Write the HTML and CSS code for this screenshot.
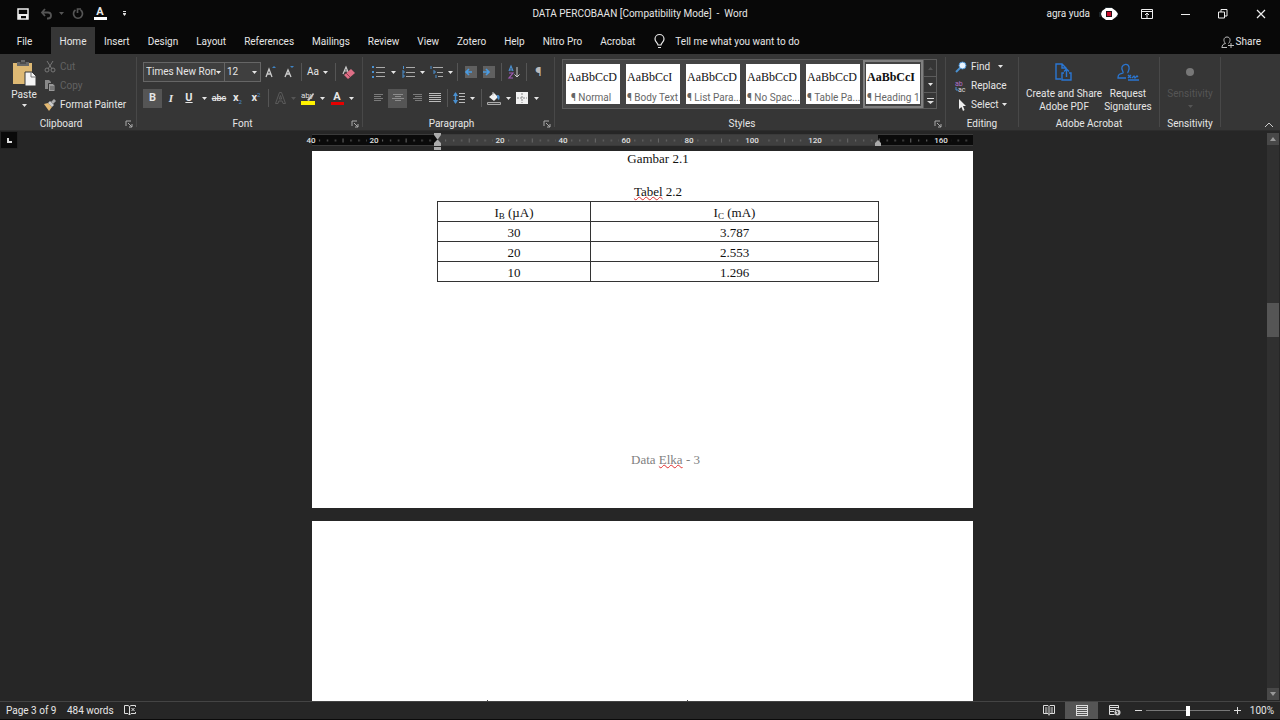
FILE: index.html
```html
<!DOCTYPE html>
<html lang="en">
<head>
<meta charset="utf-8">
<title>DATA PERCOBAAN [Compatibility Mode] - Word</title>
<link rel="stylesheet" href="styles.css">
</head>
<body>
<svg class="defs" aria-hidden="true">
  <symbol id="arrow" viewBox="0 0 5 3"><path d="M0 0h5L2.500 3z" fill="currentColor"/></symbol>
  <symbol id="launch" viewBox="0 0 8 8"><path d="M1 6V1h5M3 3l4 4M7 4v3H4" fill="none" stroke="currentColor"/></symbol>
</svg>
<div class="app">
  <header class="titlebar">
    <div class="quick">
      <button class="ib" aria-label="Save"><svg width="12" height="12" viewBox="0 0 12 12"><path d="M1 1h10v10H1z" fill="none" stroke="#eee" stroke-width="1.500"/><path d="M1 6h10v5H9V8H4v3H1z" fill="#eee"/></svg></button>
      <button class="ib dim" aria-label="Undo"><svg width="14" height="12" viewBox="0 0 14 12"><path d="M5 1L2 4.500 5 8M2 4.500h6c4 0 4 6 0 6H7" fill="none" stroke="currentColor" stroke-width="1.800"/></svg></button>
      <button class="drop dim" aria-label="Undo list"><svg width="5" height="3"><use href="#arrow"/></svg></button>
      <button class="ib dim" aria-label="Redo"><svg width="12" height="12" viewBox="0 0 12 12"><path d="M8.500 2a4.500 4.500 0 1 1-5 0M3 1h3.500v4" fill="none" stroke="currentColor" stroke-width="1.700" transform="matrix(-1 0 0 1 12 0)"/></svg></button>
      <button class="ib colorA white" aria-label="Font colour"><span>A</span><i></i></button>
      <button class="more" aria-label="Customize"><svg width="3" height="5" viewBox="0 0 3 5"><path d="M0 0h3v1H0zM0 2h3v1L1.500 5 0 3z" fill="#ddd"/></svg></button>
    </div>
    <h1>DATA PERCOBAAN [Compatibility Mode]&nbsp; - &nbsp;Word</h1>
    <div class="window">
      <span>agra yuda</span>
      <svg class="avatar" width="18" height="16" viewBox="0 0 18 16"><path d="M0 6v5M17 6v5M5 2h7" stroke="#30434a"/><path d="M6 2h6l4 3 2 3-2 3-4 3H6l-4-3-1-3 1-3z" fill="#fff"/><path d="M6 5h6v6H6z" fill="#241118"/><path d="M7 6h4v4H7z" fill="#c8102e"/></svg>
      <button aria-label="Ribbon display"><svg width="12" height="10" viewBox="0 0 12 10"><path d="M.5.5h11v9H.5zM.5 2.500h11M6 9V4M4 6l2-2 2 2" fill="none" stroke="#eee"/></svg></button>
      <button aria-label="Minimize"><svg width="9" height="10"><path d="M0 5.500h9" stroke="#eee"/></svg></button>
      <button aria-label="Restore"><svg width="10" height="10" viewBox="0 0 10 10"><path d="M.5 3h6v6h-6zM3 3V.5h6V7H6.500" fill="none" stroke="#eee"/></svg></button>
      <button aria-label="Close"><svg width="10" height="10" viewBox="0 0 10 10"><path d="M1 1l8 8M9 1L1 9" stroke="#eee" stroke-width="1.200"/></svg></button>
    </div>
  </header>
  <nav class="tabs">
    <button>File</button><button class="on">Home</button><button>Insert</button><button>Design</button><button>Layout</button><button>References</button><button>Mailings</button><button>Review</button><button>View</button><button>Zotero</button><button>Help</button><button>Nitro Pro</button><button>Acrobat</button>
    <label class="tell"><svg width="12" height="15" viewBox="0 0 12 15"><path d="M4 11c0-2-3-3-3-6a4.500 4.500 0 0 1 9 0c0 3-3 4-3 6zM4 13.500h3" fill="none" stroke="#e8e8e8" stroke-width="1.200"/></svg><input type="text" aria-label="Tell me what you want to do" placeholder="Tell me what you want to do"></label>
    <button class="share"><svg width="13" height="13" viewBox="0 0 13 13"><path d="M1 12c0-3 1-4 3.500-4.500C2 5 2.500 1 6 1s4 4 1.500 6.500M1 11.500h5M10 7v5M7 9.500h6" fill="none" stroke="#bbb"/></svg>Share</button>
  </nav>
  <section class="ribbon">
    <div class="group clip">
      <div class="body">
        <button class="paste"><svg width="24" height="26" viewBox="0 0 24 26"><path d="M1 3h19v21H1z" fill="#deb974"/><path d="M5 2h4V0h4v2h4v4H5z" fill="#686868"/><path d="M8 3h6" stroke="#333"/><path d="M13 12h7l4 4v10H13z" fill="#f4f4f4" stroke="#363636"/><path d="M19 12v5h5" fill="none" stroke="#777"/></svg><span>Paste</span><svg width="5" height="3"><use href="#arrow"/></svg></button>
        <div class="stack">
          <button class="line off"><svg width="12" height="12" viewBox="0 0 12 12"><path d="M3 0l5 8M9 0L4 8" stroke="#777" fill="none"/><circle cx="3" cy="9" r="2" fill="none" stroke="#777"/><circle cx="9" cy="9" r="2" fill="none" stroke="#777"/></svg>Cut</button>
          <button class="line off"><svg width="12" height="12" viewBox="0 0 12 12"><path d="M1 0h4l2 2v7H1z" fill="#888"/><path d="M4.500 3.500H9l2 2v6H4.500z" fill="#999" stroke="#363636"/><path d="M6 7h4M6 9h4" stroke="#555"/></svg>Copy</button>
          <button class="line"><svg width="12" height="12" viewBox="0 0 12 12"><path d="M0 5l4-1 4 4-3 4z" fill="#e2b872"/><path d="M4 4l2-2 4 4-2 2z" fill="#ccc"/><path d="M7 3l3-3 2 2-3 3z" fill="#aaa"/></svg>Format Painter</button>
        </div>
      </div>
      <div class="name">Clipboard<button aria-label="Clipboard options"><svg width="8" height="8"><use href="#launch"/></svg></button></div>
    </div>
    <div class="group font">
      <div class="body rows">
        <div class="r f1">
          <label class="sel"><select aria-label="Font"><option>Times New Roman</option></select><svg width="5" height="3"><use href="#arrow"/></svg></label>
          <label class="sel"><select aria-label="Font size"><option>12</option></select><svg width="5" height="3"><use href="#arrow"/></svg></label>
          <button class="gl" aria-label="Grow font"><svg width="14" height="12" viewBox="0 0 14 12"><path d="M2 11L5 3l3 8M3 8h4" fill="none" stroke="#ccc" stroke-width="1.300"/><path d="M8 2l2-2 2 2z" fill="#3f83c4"/></svg></button>
          <button class="gl" aria-label="Shrink font"><svg width="12" height="12" viewBox="0 0 12 12"><path d="M2 11l3-7 3 7M3 8h4" fill="none" stroke="#ccc" stroke-width="1.300"/><path d="M7 0h4L9 2z" fill="#3f83c4"/></svg></button>
          <i class="sep"></i><button class="gl">Aa</button><button class="drop" aria-label="Change case"><svg width="5" height="3"><use href="#arrow"/></svg></button><i class="sep"></i>
          <button class="gl" aria-label="Clear formatting"><svg width="13" height="13" viewBox="0 0 13 13"><path d="M1 8l3-7 2 5M2 5h3" fill="none" stroke="#ccc" stroke-width="1.200"/><path d="M2 9l7-6 4 4-7 6z" fill="#de6f86"/><path d="M4 7l4 4" stroke="#8b3c50"/></svg></button>
        </div>
        <div class="r f2">
          <button class="gl on"><b>B</b></button><button class="gl ital"><b>I</b></button><button class="gl"><b><u>U</u></b></button><button class="drop" aria-label="Underline style"><svg width="5" height="3"><use href="#arrow"/></svg></button>
          <button class="gl strike"><s>abc</s></button><button class="gl"><b>x</b><small class="lo">2</small></button><button class="gl"><b>x</b><small class="hi">2</small></button><i class="sep"></i>
          <button class="gl" aria-label="Text effects"><svg width="11" height="12" viewBox="0 0 11 12"><path d="M.5 11.500L4.500.5h2l4 11H8L7.200 9H3.800L3 11.500zM4.300 7h2.400L5.500 3.500z" fill="none" stroke="#5a5a5a"/></svg></button><button class="drop dim" aria-label="Text effect list"><svg width="5" height="3"><use href="#arrow"/></svg></button>
          <button class="gl" aria-label="Highlight"><svg width="14" height="14" viewBox="0 0 14 14"><text x="0" y="7" font-size="8" fill="#ddd">aby</text><path d="M6 9l6-7 1 1-5 7z" fill="#ccc"/><path d="M0 10h14v4H0z" fill="#fff200"/></svg></button><button class="drop" aria-label="Highlight colour"><svg width="5" height="3"><use href="#arrow"/></svg></button>
          <button class="gl colorA red" aria-label="Font colour"><span>A</span><i></i></button><button class="drop" aria-label="Font colours"><svg width="5" height="3"><use href="#arrow"/></svg></button>
        </div>
      </div>
      <div class="name">Font<button aria-label="Font options"><svg width="8" height="8"><use href="#launch"/></svg></button></div>
    </div>
    <div class="group para">
      <div class="body rows">
        <div class="r p1">
          <button class="gl" aria-label="Bullets"><svg width="13" height="12" viewBox="0 0 13 12"><path d="M0 1h2M0 6h2M0 11h2" stroke="#4a90d0" stroke-width="2"/><path d="M4 1.500h9M4 6.500h9M4 10.500h9" stroke="#aaa"/></svg></button><button class="drop" aria-label="Bullet style"><svg width="5" height="3"><use href="#arrow"/></svg></button>
          <button class="gl" aria-label="Numbering"><svg width="13" height="12" viewBox="0 0 13 12"><path d="M1.500 0v3M0 5h2v2H0M0 9h2v2H0" fill="none" stroke="#4a90d0"/><path d="M4 1.500h9M4 6.500h9M4 10.500h9" stroke="#aaa"/></svg></button><button class="drop" aria-label="Number style"><svg width="5" height="3"><use href="#arrow"/></svg></button>
          <button class="gl" aria-label="Multilevel list"><svg width="13" height="12" viewBox="0 0 13 12"><path d="M1 0v3M3 5h2v2H3M6 9v3" fill="none" stroke="#4a90d0"/><path d="M3 1.500h10M7 6.500h6M8 10.500h5" stroke="#aaa"/></svg></button><button class="drop" aria-label="List style"><svg width="5" height="3"><use href="#arrow"/></svg></button><i class="sep"></i>
          <button class="gl" aria-label="Decrease indent"><svg width="12" height="12" viewBox="0 0 12 12"><path d="M0 0h12v12H0z" fill="#606060"/><path d="M7 6H1M4 3L1 6l3 3" fill="none" stroke="#4a9ae0" stroke-width="1.700"/></svg></button>
          <button class="gl" aria-label="Increase indent"><svg width="12" height="12" viewBox="0 0 12 12"><path d="M0 0h12v12H0z" fill="#606060"/><path d="M0 6h6M3 3l3 3-3 3" fill="none" stroke="#4a9ae0" stroke-width="1.700"/></svg></button><i class="sep"></i>
          <button class="gl" aria-label="Sort"><svg width="12" height="13" viewBox="0 0 12 13"><path d="M1 5l2-5 2 5M1 4h4" fill="none" stroke="#4a90d0" stroke-width="1.200"/><path d="M1 7h4L1 12h4" fill="none" stroke="#a05ab5" stroke-width="1.200"/><path d="M9 1v10M6.500 8.500L9 11l2.500-2.500" fill="none" stroke="#ccc"/></svg></button><i class="sep"></i>
          <button class="gl pil">¶</button>
        </div>
        <div class="r p2">
          <button class="gl" aria-label="Align left"><svg width="10" height="10"><path d="M0 1.500h9M0 3.500h7M0 5.500h9M0 7.500h7" stroke="#7b7b7b"/></svg></button>
          <button class="gl on" aria-label="Centre"><svg width="12" height="10"><path d="M1 1.500h10M3 3.500h6M0 5.500h12M3 7.500h6" stroke="#8d8d8d"/></svg></button>
          <button class="gl" aria-label="Align right"><svg width="10" height="10"><path d="M1 1.500h9M3 3.500h7M1 5.500h9M3 7.500h7" stroke="#7b7b7b"/></svg></button>
          <button class="gl" aria-label="Justify"><svg width="12" height="10"><path d="M0 .5h12M0 2.500h12M0 4.500h12M0 6.500h12M0 8.500h12" stroke="#bbb"/></svg></button><i class="sep"></i>
          <button class="gl" aria-label="Line spacing"><svg width="12" height="12" viewBox="0 0 12 12"><path d="M2.500 1v10" stroke="#4a90d0" stroke-width="1.500"/><path d="M0 4l2.500-4L5 4zM0 8l2.500 4L5 8z" fill="#4a90d0"/><path d="M6 1.500h6M6 4.500h6M6 7.500h6M6 10.500h6" stroke="#bbb"/></svg></button><button class="drop" aria-label="Spacing list"><svg width="5" height="3"><use href="#arrow"/></svg></button><i class="sep"></i>
          <button class="gl" aria-label="Shading"><svg width="14" height="13" viewBox="0 0 14 13"><path d="M2 5l5-4 4 4-4 4z" fill="#f2f2f2"/><path d="M6 0v4" stroke="#ccc"/><path d="M10 3c3 0 3 2 2 5-2-1-2-3-2-5" fill="#4a90d0"/><path d="M.5 10.500h13v2H.5z" fill="#444" stroke="#aaa"/></svg></button><button class="drop" aria-label="Shading colours"><svg width="5" height="3"><use href="#arrow"/></svg></button>
          <button class="gl" aria-label="Borders"><svg width="12" height="12" viewBox="0 0 12 12"><path d="M0 0h12v12H0z" fill="#f2f2f2"/><path d="M6 1v10M1 6h10" stroke="#888" stroke-dasharray="2 1"/></svg></button><button class="drop" aria-label="Border list"><svg width="5" height="3"><use href="#arrow"/></svg></button>
        </div>
      </div>
      <div class="name">Paragraph<button aria-label="Paragraph options"><svg width="8" height="8"><use href="#launch"/></svg></button></div>
    </div>
    <div class="group styles">
      <div class="body">
        <div class="gallery">
          <button class="tile"><span>AaBbCcD</span><em>¶ Normal</em></button><button class="tile"><span>AaBbCcI</span><em>¶ Body Text</em></button><button class="tile"><span>AaBbCcD</span><em>¶ List Para...</em></button><button class="tile"><span>AaBbCcD</span><em>¶ No Spac...</em></button><button class="tile"><span>AaBbCcD</span><em>¶ Table Pa...</em></button><button class="tile cur"><span>AaBbCcI</span><em>¶ Heading 1</em></button>
          <div class="scroller"><button class="dim" aria-label="Previous styles"><svg width="5" height="3"><path d="M0 3h5L2.500 0z" fill="currentColor"/></svg></button><button aria-label="Next styles"><svg width="5" height="3"><use href="#arrow"/></svg></button><button aria-label="More styles"><svg width="7" height="6"><path d="M0 0h7v1H0zM0 3h7L3.500 6z" fill="#ddd"/></svg></button></div>
        </div>
      </div>
      <div class="name">Styles<button aria-label="Styles options"><svg width="8" height="8"><use href="#launch"/></svg></button></div>
    </div>
    <div class="group edit">
      <div class="body stack">
        <button class="line"><svg width="12" height="12" viewBox="0 0 12 12"><path d="M5 7l-4 4" stroke="#4a90d0" stroke-width="2"/><circle cx="7.500" cy="4.500" r="3.500" fill="#e9f4ff" stroke="#4a90d0"/></svg>Find<svg class="far" width="5" height="3"><use href="#arrow"/></svg></button>
        <button class="line"><svg width="12" height="12" viewBox="0 0 12 12"><text x="0" y="6" font-size="7" fill="#b070c8">ab</text><text x="3" y="12" font-size="7" fill="#ddd">ac</text><path d="M1 7v3h2" fill="none" stroke="#4a90d0"/></svg>Replace</button>
        <button class="line"><svg width="12" height="12" viewBox="0 0 12 12"><path d="M4 0v10l2.500-2L8 12l1.500-1L8 7h3z" fill="#eee"/></svg>Select<svg width="5" height="3"><use href="#arrow"/></svg></button>
      </div>
      <div class="name">Editing</div>
    </div>
    <div class="group adobe">
      <div class="body">
        <button class="big"><svg width="18" height="19" viewBox="0 0 18 19"><path d="M6 16H1V1h6l4 4v3M7 1v4h4M9 10H7v7h9v-7h-2M11.500 14V6M9 8.500L11.500 6 14 8.500" fill="none" stroke="#2a76d2" stroke-width="1.400"/></svg><span>Create and Share<br>Adobe PDF</span></button>
        <button class="big"><svg width="22" height="19" viewBox="0 0 22 19"><path d="M9 15H1c0-4 2-4 5-5 1-1-2-3-1-6s6-4 7 0-2 5-1 6M11 17h11M11 12l3 3M14 12l-3 3M15 15l2-2 1 2 2-2 1 1" fill="none" stroke="#2a76d2" stroke-width="1.300"/></svg><span>Request<br>Signatures</span></button>
      </div>
      <div class="name">Adobe Acrobat</div>
    </div>
    <div class="group sens">
      <div class="body"><button class="big off"><svg width="18" height="19"><circle cx="9" cy="9" r="4" fill="#777"/></svg><span>Sensitivity</span><svg width="5" height="3"><use href="#arrow"/></svg></button></div>
      <div class="name">Sensitivity</div>
    </div>
    <button class="fold" aria-label="Collapse ribbon"><svg width="10" height="6"><path d="M1 5l4-4 4 4" fill="none" stroke="#ccc"/></svg></button>
  </section>
  <main class="work">
    <button class="tabstop" aria-label="Tab selector"><svg width="5" height="5"><path d="M1 0v4h4" fill="none" stroke="#ddd" stroke-width="2"/></svg></button>
    <div class="desk">
      <svg class="ruler" width="661" height="20" viewBox="0 0 661 20" role="img" aria-label="Ruler">
        <defs><pattern id="ticks" x="-1" y="4" width="31.540" height="11" patternUnits="userSpaceOnUse"><path d="M.5 3.500v4M8.500 4.500v2M16.500 4.500v2M24.500 4.500v2" stroke="#6a6a6a"/></pattern></defs>
        <path d="M0 4h661v10H0z" fill="#0a0a0a"/><path d="M126 4h440v10H126z" fill="#404040"/><path d="M0 3.500h661M0 14.500h661" stroke="#3a3a3a"/>
        <path d="M0 4h661v10H0z" fill="url(#ticks)"/>
        <path d="M0 4h6v10H0zM55 4h14v10H55z" fill="#0a0a0a"/><path d="M181 4h14v10h-14zM244 4h14v10h-14zM307 4h14v10h-14zM370 4h14v10h-14zM430 4h20v10h-20zM493 4h20v10h-20z" fill="#404040"/><path d="M619 4h20v10h-20z" fill="#0a0a0a"/>
        <g class="nums"><text x="-1" y="12">40</text><text x="62" y="12">20</text><text x="188" y="12">20</text><text x="251" y="12">40</text><text x="314" y="12">60</text><text x="377" y="12">80</text><text x="440" y="12">100</text><text x="503" y="12">120</text><text x="629" y="12">160</text></g>
        <path d="M122 2h7v2l-3 4h-1l-3-4zM122 15v-3l3-3h1l3 3v3zM122 16h7v3h-7zM563 15v-3l3-3 3 3v3z" fill="#aaa"/>
      </svg>
      <article class="page first">
        <p>Gambar 2.1</p>
        <p class="cap"><span class="typo">Tabel</span> 2.2</p>
        <table><thead><tr><th>I<sub>B</sub> (µA)</th><th>I<sub>C</sub> (mA)</th></tr></thead>
        <tbody><tr><td>30</td><td>3.787</td></tr><tr><td>20</td><td>2.553</td></tr><tr><td>10</td><td>1.296</td></tr></tbody></table>
        <footer>Data <span class="typo">Elka</span> - 3</footer>
      </article>
      <article class="page next"><i></i><i></i></article>
    </div>
    <div class="bar"><button aria-label="Scroll up"><svg width="6" height="4"><path d="M0 4l3-4 3 4z" fill="#999"/></svg></button><div class="track"><div class="thumb"></div></div><button aria-label="Scroll down"><svg width="6" height="4"><path d="M0 0l3 4 3-4z" fill="#999"/></svg></button></div>
  </main>
  <footer class="status">
    <span class="pg">Page 3 of 9</span><span class="wd">484 words</span>
    <button aria-label="Proofing"><svg width="12" height="11" viewBox="0 0 12 11"><path d="M5.500 1.500L4 .5H.5v8H4l1.500 1.500V1.500L7 .5h4.500V2M5.500 10L7 8.500h4.500V7M7.500 3l3 3M10.500 3l-3 3" fill="none" stroke="#ddd"/></svg></button>
    <div class="views">
      <button aria-label="Read mode"><svg width="12" height="11" viewBox="0 0 12 11"><path d="M6 1.500v9M6 1.500L5 .5H.5v8H5l1 1 1-1h4.500v-8H7zM2 3h2.500M2 5h2.500M2 7h2.500M7.500 3H10M7.500 5H10M7.500 7H10" fill="none" stroke="#ddd"/></svg></button>
      <button class="on" aria-label="Print layout"><svg width="12" height="11"><path d="M0 .5h12M1 2.500h10M1 4.500h10M1 6.500h10M1 8.500h10M0 10.500h12M.5 0v11M11.500 0v11" stroke="#ddd"/></svg></button>
      <button aria-label="Web layout"><svg width="12" height="11" viewBox="0 0 12 11"><path d="M.5.5h9v3M.5.5v9h5M1 2.500h8M1 4.500h6M1 6.500h4" fill="none" stroke="#ddd"/><circle cx="8.500" cy="7.500" r="3" fill="#ccc"/><path d="M7 6l2 1-1 2" stroke="#333" fill="none"/></svg></button>
    </div>
    <button class="z" aria-label="Zoom out"><svg width="7" height="7"><path d="M0 3.500h7" stroke="#ddd"/></svg></button>
    <input type="range" min="0" max="200" value="100" aria-label="Zoom">
    <button class="z" aria-label="Zoom in"><svg width="7" height="7"><path d="M0 3.500h7M3.500 0v7" stroke="#ddd"/></svg></button>
    <button class="pct">100%</button>
  </footer>
</div>
</body>
</html>
```
FILE: styles.css
```css
* { box-sizing: border-box; }
body { margin: 0; background: #262626; color: #e6e6e6; font: 10px/14px Roboto, "Open Sans", sans-serif; }
button, input, select { font: inherit; color: inherit; background: none; border: 0; padding: 0; margin: 0; }
button { display: flex; align-items: center; justify-content: center; white-space: nowrap; }
svg { display: block; flex: none; overflow: visible; }
.defs { position: absolute; width: 0; height: 0; }
.app { height: 100vh; display: flex; flex-direction: column; overflow: hidden; }
.dim { color: #555; }

.titlebar { flex: none; height: 27px; background: #080808; display: grid; grid-template-columns: 1fr auto 1fr; align-items: center; }
.titlebar h1 { margin: 0; font-size: 10px; font-weight: 400; line-height: 14px; }
.quick { display: flex; align-items: center; padding-left: 13px; }
.quick .ib { width: 20px; margin-right: 4px; }
.quick .drop { width: 8px; margin: 0 3px 0 -2px; }
.quick .ib.dim { margin-right: 2px; }
.quick .more { width: 20px; }
.colorA { flex-direction: column; }
.colorA span { font-size: 11px; line-height: 10px; font-weight: 700; }
.colorA i { width: 13px; height: 3px; background: #fff; }
.colorA.red i { background: #e60000; }
.window { display: flex; justify-content: flex-end; align-items: center; }
.avatar { margin: 0 10px 0 10px; }
.window button { width: 38px; height: 27px; }

.tabs { flex: none; height: 27px; display: flex; align-items: stretch; background: #080808; }
.tabs > button { padding: 2px 9px 0; }
.tabs > button:first-child { width: 49px; padding: 2px 0 0; margin-right: 2px; }
.tabs .on { background: #363636; width: 44px; padding: 2px 0 0; }
.tell { display: flex; align-items: center; gap: 9px; padding: 2px 0 0 10px; }
.tell input { width: 140px; outline: 0; }
.tell input::placeholder { color: #e6e6e6; opacity: 1; }
.tabs > .share { margin-left: auto; gap: 2px; padding: 3px 19px 0 0; }

.ribbon { flex: none; height: 77px; display: flex; background: #363636; border-bottom: 1px solid #2c2c2c; }
.group { flex: none; display: flex; flex-direction: column; border-right: 1px solid #484848; margin: 3px 0; }
.body { height: 60px; flex: none; display: flex; }
.name { display: flex; justify-content: center; line-height: 14px; position: relative; }
.name button { position: absolute; right: 3px; top: 3px; color: #aaa; }
.clip { width: 137px; }
.font { width: 226px; }
.para { width: 192px; }
.styles { width: 391px; }
.edit { width: 73px; }
.adobe { width: 141px; }
.sens { width: 61px; }
.clip .name, .font .name, .para .name { padding-right: 14px; }
.styles .name { padding-right: 16px; }
.paste { width: 44px; flex-direction: column; justify-content: flex-start; padding: 3px 0 0 4px; gap: 2px; }
.stack { display: flex; flex-direction: column; }
.line { height: 19px; justify-content: flex-start; gap: 4px; }
.off { color: #626262; }
.edit .line { padding-left: 9px; }
.edit .far { margin-left: 4px; }

.rows { flex-direction: column; gap: 6px; padding: 5px 0 0 6px; }
.r { display: grid; height: 20px; align-items: center; }
.f1 { grid-template-columns: 82px 36px 19px 18px 6px 18px 7px 12px 14px; }
.f2 { grid-template-columns: 19px 18px 18px 12px 18px 19px 18px 6px 18px 9px 20px 9px 20px 8px; }
.p1 { grid-template-columns: 19px 10px 20px 8px 20px 8px 7px 19px 18px 7px 18px 7px 17px; }
.p2 { grid-template-columns: 19px 19px 19px 18px 6px 18px 9px 8px 18px 10px 18px 10px; }
.sep { width: 1px; height: 18px; background: #555; justify-self: center; }
.gl { height: 19px; min-width: 0; }
.gl b { font-size: 11px; }
.gl small { font-size: 6px; line-height: 6px; color: #4a90d0; }
.gl .lo { align-self: flex-end; padding-bottom: 3px; }
.gl .hi { align-self: flex-start; padding-top: 3px; }
.on { background: #555; }
.ital { font-family: "Liberation Serif", serif; font-style: italic; }
.strike { font-size: 9px; font-weight: 500; }
.pil { font-size: 13px; color: #bbb; }
.sel { position: relative; height: 20px; border: 1px solid #666; background: #3f3f3f; display: flex; align-items: center; }
.sel + .sel { border-left: 0; }
.sel select { appearance: none; width: 100%; height: 18px; padding: 0 8px 0 2px; outline: 0; text-overflow: clip; overflow: hidden; }
.sel svg { position: absolute; right: 3px; top: 8px; pointer-events: none; }

.gallery { display: flex; margin: 2px 0 0 7px; height: 50px; border: 1px solid #5c5c5c; background: #444; }
.tile { width: 60px; height: 48px; border: 3px solid #444; border-top-width: 4px; border-bottom-width: 4px; background: #fff; background-clip: padding-box; flex-direction: column; align-items: flex-start; justify-content: space-between; overflow: hidden; color: #111; padding: 6px 1px 0; }
.tile span { font: 12px/14px "Liberation Serif", serif; }
.tile em { font-style: normal; color: #666; padding-left: 4px; line-height: 13px; }
.tile:nth-child(n+2) em { padding-left: 0; }
.tile.cur { outline: 2px solid #808080; outline-offset: -2px; }
.tile.cur span { font-weight: 700; }
.scroller { width: 13px; display: grid; grid-template-rows: repeat(3, 1fr); background: #363636; border-left: 1px solid #5c5c5c; }
.scroller button + button { border-top: 1px solid #5c5c5c; }

.big { flex-direction: column; justify-content: flex-start; padding-top: 6px; gap: 5px; line-height: 13px; }
.adobe .body { gap: 2px; padding-left: 7px; }
.adobe .big { flex: none; }
.sens .body { justify-content: center; }
.sens .big { color: #555; }
.fold { margin: auto 6px 2px auto; }

.work { flex: 1; min-height: 0; display: flex; overflow: hidden; }
.tabstop { width: 18px; height: 18px; flex: none; background: #0a0a0a; border: 1px solid #222; }
.desk { flex: 1; min-width: 0; display: flex; flex-direction: column; align-items: center; }
.ruler { flex: none; }
.nums { font-size: 8px; font-weight: 500; fill: #e0e0e0; text-anchor: middle; }
.page { flex: none; width: 661px; background: #fff; color: #111; font: 13px/16px "Liberation Serif", serif; text-align: center; }
.first { min-height: 357px; padding: 0 94px 40px 125px; display: flex; flex-direction: column; }
.page p { margin: 0; }
.page .cap { margin-top: 17px; }
.typo { text-decoration: underline wavy #e03030 1px; text-underline-offset: 0; text-decoration-skip-ink: none; }
table { border-collapse: collapse; margin-top: 1px; width: 100%; table-layout: fixed; }
th, td { border: 1px solid #333; height: 20px; padding: 2px 0 0; font-weight: 400; line-height: 16px; }
th:first-child { width: 153px; }
sub { font-size: 9px; line-height: 0; vertical-align: -2px; }
.page footer { margin-top: auto; padding-left: 15px; color: #7f7f7f; }
.next { flex: 1; margin-top: 13px; display: flex; align-items: flex-end; padding-left: 175px; gap: 199px; }
.next i { width: 1px; height: 1px; background: #444; }
.bar { width: 13px; flex: none; display: flex; flex-direction: column; padding: 2px 1px 1px 0; }
.bar button { height: 12px; background: #484848; }
.track { flex: 1; background: #303030; padding-top: 158px; }
.thumb { height: 34px; background: #555; }

.status { flex: none; height: 19px; display: flex; align-items: center; border-top: 1px solid #444; border-bottom: 1px solid #0a0a0a; padding: 0 6px; background: #262626; }
.pg { width: 61px; }
.wd { width: 57px; }
.views { margin-left: auto; display: flex; align-self: stretch; }
.views button { width: 33px; }
.z { width: 15px; }
.status input { appearance: none; width: 84px; height: 12px; background: linear-gradient(#777, #777) center / 100% 1px no-repeat; }
.status input::-webkit-slider-thumb { appearance: none; width: 4px; height: 10px; background: #fff; }
.pct { width: 29px; justify-content: flex-end; }
```
